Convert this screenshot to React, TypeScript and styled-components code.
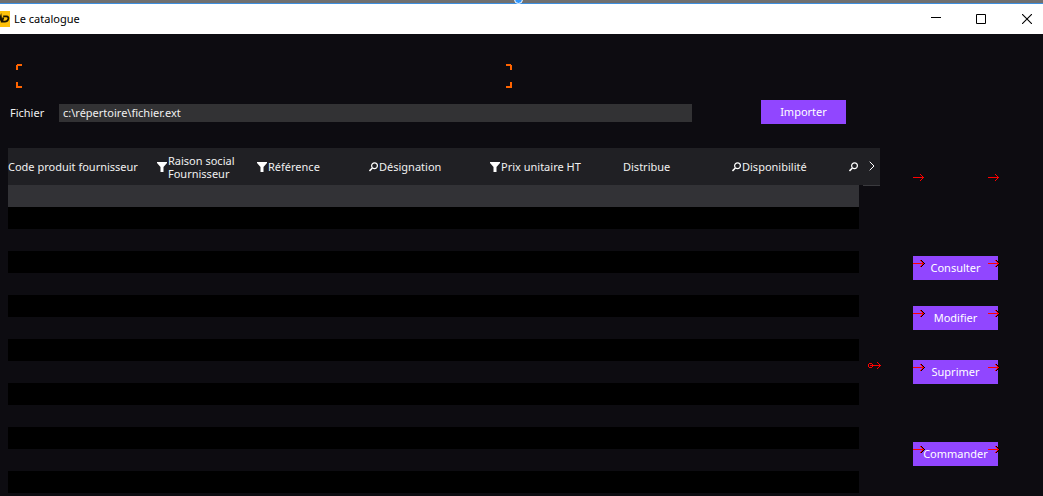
import React from "react";
import styled, { createGlobalStyle } from "styled-components";

const GlobalStyle = createGlobalStyle`
  *, *::before, *::after { box-sizing: border-box; }
  body { margin: 0; background: #0d0c11; }
  body, button, input { font-family: "Noto Sans", "Open Sans", sans-serif; font-size: 11px; }
  button { padding: 0; border: 0; background: none; color: inherit; cursor: pointer; }
  svg { display: block; }
`;

const Window = styled.div`
  position: relative;
  min-height: 100vh;
  overflow: hidden;
  background: #0d0c11;
  color: #f0f0f0;
`;

const Backdrop = styled.div`
  height: 3px;
  background: #707070;
`;

const Handle = styled.span`
  position: absolute;
  top: -5px;
  left: calc(50% - 8px);
  width: 9px;
  height: 9px;
  border: 1px solid #ffffff;
  border-radius: 50%;
  background: #3399ff;
`;

const TitleBar = styled.header`
  display: flex;
  align-items: center;
  height: 31px;
  border-top: 1px solid #3d8fe0;
  background: #ffffff;
  color: #000000;
`;

const Title = styled.h1`
  flex: 1;
  margin: 0 0 0 4px;
  font-size: 11px;
  line-height: 16px;
  font-weight: 400;
`;

const CaptionButton = styled.button`
  display: grid;
  place-items: center;
  width: 46px;
  height: 30px;
`;

const CaptionButtons = styled.div`
  display: flex;
  margin-right: -7px;
`;

const Content = styled.main`
  padding: 30px 45px 0 8px;
`;

const Heading = styled.div`
  display: flex;
  justify-content: space-between;
  width: 496px;
  max-width: 100%;
  height: 24px;
  margin-left: 8px;
`;

const Corners = styled.div`
  display: flex;
  flex-direction: column;
  justify-content: space-between;
`;

const ImportRow = styled.form`
  display: flex;
  align-items: center;
  margin: 12px 152px 24px 2px;
`;

const Label = styled.label`
  width: 49px;
`;

const PathInput = styled.input`
  flex: 1;
  min-width: 0;
  height: 18px;
  margin: 2px 69px 0 0;
  padding: 0 4px 2px;
  border: 0;
  background: #323234;
  color: #f0f0f0;
`;

const ActionButton = styled.button`
  position: relative;
  flex: none;
  width: 85px;
  height: 24px;
  padding-bottom: 2px;
  background: #9146ff;
  color: #ffffff;
`;

const Workspace = styled.div`
  display: flex;
  align-items: flex-start;
  gap: 33px;
`;

const TableArea = styled.div`
  flex: 1;
  min-width: 0;
`;

const Table = styled.table`
  width: 100%;
  table-layout: fixed;
  border-collapse: collapse;
`;

const HeadCell = styled.th`
  height: 37px;
  padding: 0;
  background: #202024;
  font-weight: 400;
  text-align: left;
`;

const HeadContent = styled.div`
  display: flex;
  align-items: center;
  justify-content: space-between;
  padding-right: 1px;
  line-height: 13px;
`;

const ScrollButton = styled.button`
  display: grid;
  place-items: center;
  width: 100%;
  height: 37px;
  padding: 0 0 2px 4px;
`;

const Row = styled.tr<{ $tone: string }>`
  height: 22px;
  td { padding: 0; }
  td:not(:last-child) { background: ${(p) => p.$tone}; }
`;

const EdgeCell = styled.td`
  vertical-align: top;
`;

const Rule = styled.div`
  height: 1px;
  margin-left: 4px;
  background: #3a3a3e;
`;

const AnchorMark = styled.div`
  padding: 1px 0 0 9px;
`;

const Actions = styled.aside`
  display: flex;
  flex-direction: column;
  gap: 26px;
  padding-top: 22px;
`;

const Slot = styled.div`
  position: relative;
  width: 85px;
  height: 24px;
  margin-bottom: 36px;
`;

const Group = styled.div<{ $space: number }>`
  display: flex;
  padding-top: ${(p) => p.$space}px;
`;

const Mark = styled.span<{ $end?: boolean }>`
  position: absolute;
  top: 4px;
  left: ${(p) => (p.$end ? "75px" : "0")};
`;

const Arrow = ({ shaded }: { shaded?: boolean }) => (
  <svg width="12" height="7" viewBox="0 0 12 7" shapeRendering="crispEdges" aria-hidden="true">
    {shaded && <path fill="#000" d="M7 0h2v1h1v1h1v1h1v1h-1v1h-1v1h-1v1H7V6h1V5h1V4h1V3H9V2H8V1H7z" />}
    <path fill="#ff0000" d="M0 3h11v1H0zM9 2h1v1H9zM8 1h1v1H8zM7 0h1v1H7zM9 4h1v1H9zM8 5h1v1H8zM7 6h1v1H7z" />
  </svg>
);

const Marks = ({ shaded }: { shaded?: boolean }) => (
  <>
    <Mark><Arrow shaded={shaded} /></Mark>
    <Mark $end><Arrow shaded={shaded} /></Mark>
  </>
);

const Corner = ({ d }: { d: string }) => (
  <svg width="6" height="6" shapeRendering="crispEdges" aria-hidden="true">
    <path d={d} fill="#ff6400" />
  </svg>
);

const FilterIcon = () => (
  <svg width="10" height="10" viewBox="0 0 10 10" aria-hidden="true">
    <path fill="#fff" d="M0 0h10v1L6.500 5V10h-3V5L0 1z" />
  </svg>
);

const SearchIcon = () => (
  <svg width="9" height="10" viewBox="0 0 9 10" fill="none" stroke="#fff" aria-hidden="true">
    <circle cx="5.500" cy="3.800" r="2.900" strokeWidth="1.200" />
    <path d="M3.400 6L.5 8.900" strokeWidth="1.500" />
  </svg>
);

const AppIcon = () => (
  <svg width="10" height="16" viewBox="0 0 10 16" aria-hidden="true">
    <path fill="#ffc20a" d="M0 0h10v16H0z" />
    <path fill="none" stroke="#1d1600" strokeWidth="1.800" d="M-1 10L.8 5.500L1.500 10.500M3.200 5.400H6.500Q9 5.600 8.300 8Q7.500 10.600 4.800 10.600H2L3.400 6.500" />
  </svg>
);

const columns: { label: React.ReactNode; icon?: "filter" | "search"; width?: number }[] = [
  { label: "Code produit fournisseur", icon: "filter", width: 160 },
  { label: <>Raison social<br />Fournisseur</>, icon: "filter", width: 100 },
  { label: "Référence", icon: "search", width: 111 },
  { label: "Désignation", icon: "filter" },
  { label: "Prix unitaire HT", width: 122 },
  { label: "Distribue", icon: "search", width: 119 },
  { label: "Disponibilité", icon: "search", width: 117 },
];

const ROWS = 14;
const ANCHOR_ROW = 8;
const tone = (i: number) => (i === 0 ? "#323236" : i % 2 ? "#000000" : "transparent");

const actions = [
  { label: "Consulter", space: 0 },
  { label: "Modifier", space: 0 },
  { label: "Suprimer", space: 4 },
  { label: "Commander", space: 32 },
];

export default function App() {
  return (
    <Window>
      <GlobalStyle />
      <Backdrop />
      <TitleBar>
        <AppIcon />
        <Title>Le catalogue</Title>
        <CaptionButtons>
          <CaptionButton aria-label="Réduire">
            <svg width="12" height="10" shapeRendering="crispEdges"><path d="M2 3h10v1H2z" /></svg>
          </CaptionButton>
          <CaptionButton aria-label="Agrandir">
            <svg width="10" height="10"><path d="M.5.5h9v9h-9z" fill="none" stroke="#000" /></svg>
          </CaptionButton>
          <CaptionButton aria-label="Fermer">
            <svg width="10" height="10"><path d="M0 0l10 10M10 0L0 10" stroke="#000" strokeWidth="1.100" /></svg>
          </CaptionButton>
        </CaptionButtons>
      </TitleBar>
      <Handle />
      <Content>
        <Heading>
          <Corners>
            <Corner d="M1 0h5v2H2v4H0V1h1z" />
            <Corner d="M0 0h2v4h4v2H0z" />
          </Corners>
          <Corners>
            <Corner d="M0 0h5v1h1v5H4V2H0z" />
            <Corner d="M4 0h2v6H0V4h4z" />
          </Corners>
        </Heading>
        <ImportRow onSubmit={(e) => e.preventDefault()}>
          <Label htmlFor="path">Fichier</Label>
          <PathInput id="path" defaultValue={"c:\\répertoire\\fichier.ext"} />
          <ActionButton type="submit">Importer</ActionButton>
        </ImportRow>
        <Workspace>
          <TableArea>
            <Table>
              <colgroup>
                {columns.map((c, i) => <col key={i} width={c.width} />)}
                <col width={21} />
              </colgroup>
              <thead>
                <tr>
                  {columns.map((c, i) => (
                    <HeadCell key={i} scope="col">
                      <HeadContent>
                        <span>{c.label}</span>
                        {c.icon && (
                          <button aria-label={c.icon === "filter" ? "Filtrer" : "Rechercher"}>
                            {c.icon === "filter" ? <FilterIcon /> : <SearchIcon />}
                          </button>
                        )}
                      </HeadContent>
                    </HeadCell>
                  ))}
                  <HeadCell>
                    <ScrollButton aria-label="Colonnes suivantes">
                      <svg width="6" height="10" fill="none" stroke="#fff"><path d="M.7.700L5 5L.7 9.300" /></svg>
                    </ScrollButton>
                  </HeadCell>
                </tr>
              </thead>
              <tbody>
                {Array.from({ length: ROWS }, (_, i) => (
                  <Row key={i} $tone={tone(i)}>
                    {columns.map((_c, j) => <td key={j} />)}
                    <EdgeCell>
                      {i === 0 && <Rule />}
                      {i === ANCHOR_ROW && (
                        <AnchorMark>
                          <svg width="13" height="7" shapeRendering="crispEdges" fill="#ff0000" aria-hidden="true">
                            <path d="M1 1h3v1H1zM0 2h1v3H0zM4 2h1v3H4zM1 5h3v1H1zM2 3h11v1H2zM11 2h1v1h-1zM10 1h1v1h-1zM9 0h1v1H9zM11 4h1v1h-1zM10 5h1v1h-1zM9 6h1v1H9z" />
                          </svg>
                        </AnchorMark>
                      )}
                    </EdgeCell>
                  </Row>
                ))}
              </tbody>
            </Table>
          </TableArea>
          <Actions>
            <Slot><Marks /></Slot>
            {actions.map((a) => (
              <Group key={a.label} $space={a.space}>
                <ActionButton>
                  {a.label}
                  <Marks shaded />
                </ActionButton>
              </Group>
            ))}
          </Actions>
        </Workspace>
      </Content>
    </Window>
  );
}
